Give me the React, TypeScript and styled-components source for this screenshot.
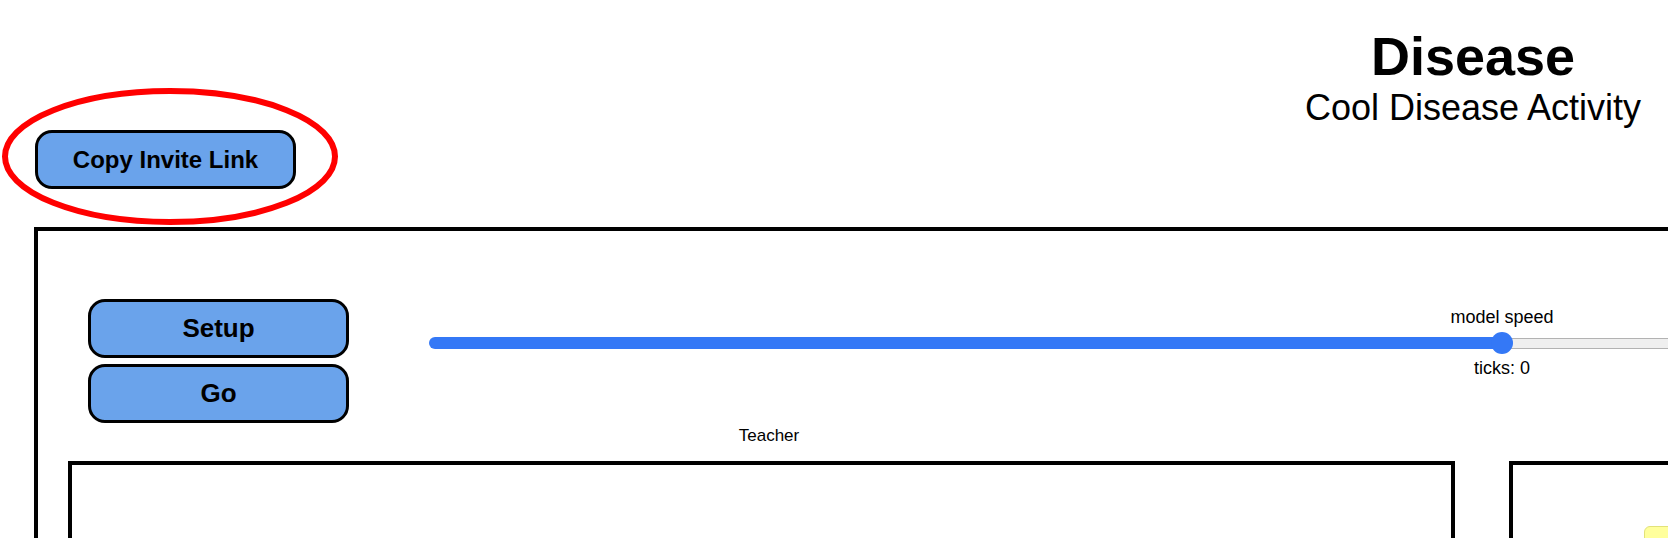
import styled, { createGlobalStyle } from "styled-components";

const GlobalStyle = createGlobalStyle`
  html, body {
    margin: 0;
    padding: 0;
    overflow: hidden;
    background: #fff;
    font-family: "Liberation Sans", Arial, sans-serif;
    color: #000;
  }
`;

const SPEED = 0.5;

export default function App() {
  return (
    <Page>
      <GlobalStyle />
      <Header>
        <TitleBlock>
          <Title>Disease</Title>
          <SubTitle>Cool Disease Activity</SubTitle>
        </TitleBlock>
      </Header>
      <InviteRow>
        <BlueButton $width={261} $height={59} $size={24}>
          Copy Invite Link
        </BlueButton>
      </InviteRow>
      <Model>
        <Controls>
          <ButtonColumn>
            <BlueButton $width={261} $height={59} $size={26}>
              Setup
            </BlueButton>
            <BlueButton $width={261} $height={59} $size={26}>
              Go
            </BlueButton>
          </ButtonColumn>
          <SpeedSlider>
            <SliderLabel>model speed</SliderLabel>
            <Track>
              <Filled style={{ width: `${SPEED * 100}%` }} />
              <Rest />
              <Thumb style={{ left: `${SPEED * 100}%` }} />
            </Track>
            <SliderLabel>ticks: 0</SliderLabel>
          </SpeedSlider>
        </Controls>
        <Views>
          <ViewColumn>
            <ViewLabel>Teacher</ViewLabel>
            <ViewBox />
          </ViewColumn>
          <ViewColumn>
            <ViewLabel aria-hidden>&nbsp;</ViewLabel>
            <ViewBox>
              <Note />
            </ViewBox>
          </ViewColumn>
        </Views>
      </Model>
      <Highlight viewBox="0 0 345 235" width={345} height={235}>
        <ellipse cx={170} cy={156.5} rx={165} ry={65.5} fill="none" stroke="#ff0000" strokeWidth={6} />
      </Highlight>
    </Page>
  );
}

const Page = styled.div`
  position: relative;
  width: 1668px;
  height: 538px;
  overflow: hidden;
`;

const Header = styled.div`
  display: flex;
  justify-content: flex-end;
  padding: 25px 25px 0 0;
`;

const TitleBlock = styled.div`
  text-align: center;
  width: 340px;
`;

const Title = styled.div`
  font-size: 54px;
  font-weight: 700;
  line-height: 62px;
`;

const SubTitle = styled.div`
  font-size: 36px;
  line-height: 41px;
  white-space: nowrap;
`;

const InviteRow = styled.div`
  padding: 2px 0 0 35px;
`;

const Highlight = styled.svg`
  position: absolute;
  left: 0;
  top: 0;
  pointer-events: none;
`;

const BlueButton = styled.button<{ $width: number; $height: number; $size: number }>`
  display: flex;
  align-items: center;
  justify-content: center;
  box-sizing: border-box;
  width: ${(p) => p.$width}px;
  height: ${(p) => p.$height}px;
  padding: 0;
  background: #6aa3eb;
  border: 3px solid #000;
  border-radius: 17px;
  font-family: "Liberation Sans", Arial, sans-serif;
  font-size: ${(p) => p.$size}px;
  font-weight: 700;
  color: #000;
`;

const Model = styled.div`
  box-sizing: border-box;
  width: 2640px;
  height: 600px;
  margin: 38px 0 0 34px;
  border: 4px solid #000;
`;

const Controls = styled.div`
  display: flex;
  align-items: flex-start;
  padding: 68px 0 0 50px;
`;

const ButtonColumn = styled.div`
  display: flex;
  flex-direction: column;
  gap: 6px;
`;

const SpeedSlider = styled.div`
  display: flex;
  flex-direction: column;
  align-items: center;
  width: 2146px;
  margin: 8px 0 0 80px;
`;

const SliderLabel = styled.div`
  font-size: 18px;
  line-height: 21px;
`;

const Track = styled.div`
  position: relative;
  display: flex;
  align-items: center;
  width: 100%;
  height: 22px;
  margin: 4px 0 4px;
`;

const Filled = styled.div`
  height: 12px;
  background: #3478f6;
  border-radius: 6px 0 0 6px;
`;

const Rest = styled.div`
  flex: 1;
  box-sizing: border-box;
  height: 11px;
  background: #efefef;
  border: 1px solid #b2b2b2;
  border-radius: 0 6px 6px 0;
`;

const Thumb = styled.div`
  position: absolute;
  top: 0;
  width: 22px;
  height: 22px;
  margin-left: -11px;
  border-radius: 50%;
  background: #3478f6;
`;

const Views = styled.div`
  display: flex;
  gap: 54px;
  padding: 0 0 0 30px;
`;

const ViewColumn = styled.div`
  display: flex;
  flex-direction: column;
`;

const ViewLabel = styled.div`
  font-size: 17px;
  line-height: 20px;
  text-align: center;
  padding: 3px 0 15px 15px;
`;

const ViewBox = styled.div`
  position: relative;
  box-sizing: border-box;
  width: 1387px;
  height: 400px;
  border: 4px solid #000;
`;

const Note = styled.div`
  position: absolute;
  left: 131px;
  top: 61px;
  width: 90px;
  height: 40px;
  background: #ffff9c;
  border: 1px solid #e2e27a;
  border-radius: 6px;
`;
